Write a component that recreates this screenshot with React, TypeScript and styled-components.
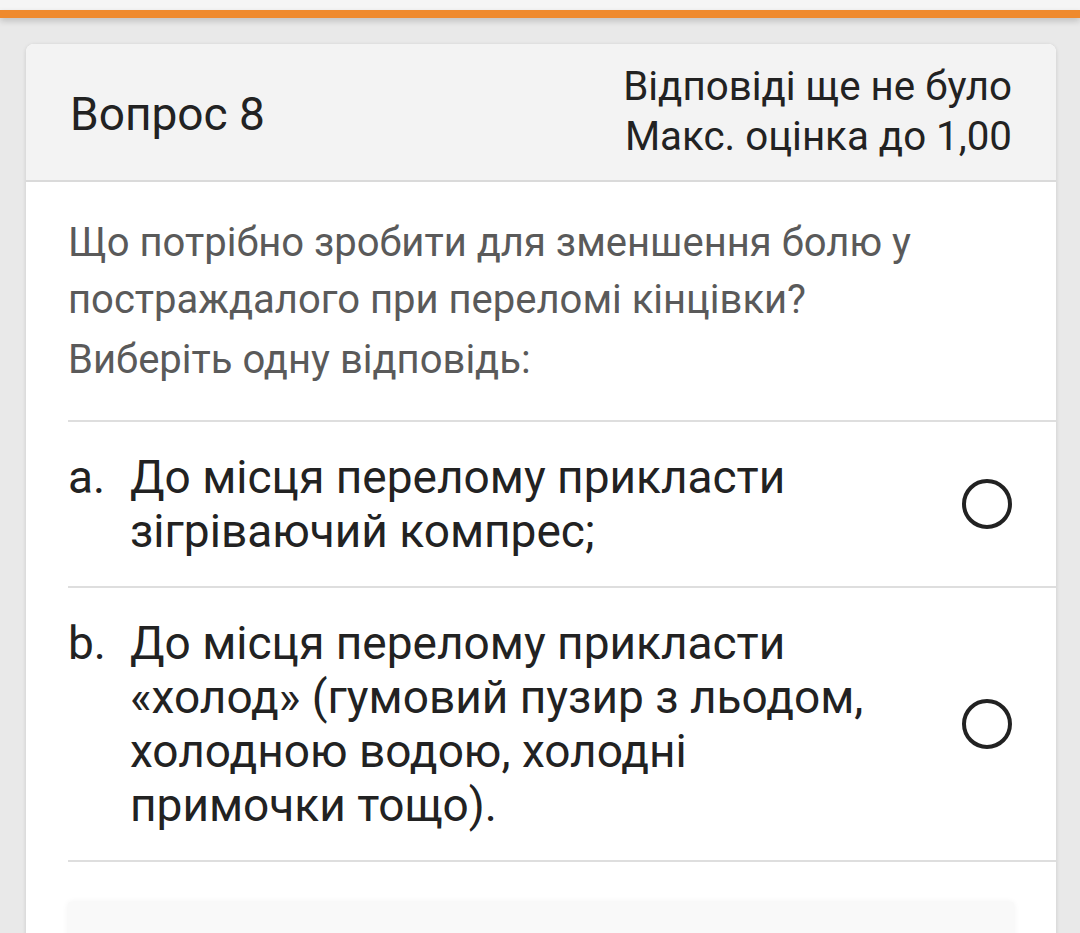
import styled, { createGlobalStyle } from 'styled-components';

const GlobalStyle = createGlobalStyle`
  html, body {
    margin: 0;
    padding: 0;
    background: #e9e9e9;
    font-family: Roboto, "Noto Sans", "Liberation Sans", sans-serif;
  }
`;

const Screen = styled.div`
  width: 1080px;
  height: 933px;
  overflow: hidden;
  background: #e9e9e9;
`;

const TopStrip = styled.div`
  height: 10px;
  background: #f5f5f5;
`;

const AccentBar = styled.div`
  height: 8px;
  background: #ef8a2e;
  box-shadow: 0 3px 6px rgba(0, 0, 0, 0.18);
`;

const Page = styled.div`
  padding: 26px 24px 0 26px;
`;

const Card = styled.div`
  background: #fff;
  border-radius: 8px;
  overflow: hidden;
  box-shadow: 0 1px 4px rgba(0, 0, 0, 0.14);
`;

const Header = styled.div`
  height: 136px;
  display: flex;
  align-items: center;
  justify-content: space-between;
  padding: 0 44px;
  background: #f3f3f3;
  border-bottom: 2px solid #dadada;
  color: #222;
`;

const Title = styled.div`
  font-size: 46px;
  padding-top: 4px;
`;

const Meta = styled.div`
  font-size: 40.3px;
  line-height: 50px;
  text-align: right;
`;

const Body = styled.div`
  padding: 32px 0 0 42px;
`;

const Question = styled.div`
  padding-right: 44px;
  color: #5a5a5a;
  font-size: 40px;
  line-height: 57px;
`;

const Prompt = styled.div`
  margin-top: 3px;
`;

const Answers = styled.div`
  margin-top: 32px;
  border-top: 2px solid #dedede;
`;

const Option = styled.div`
  display: flex;
  align-items: center;
  padding: 28px 44px 28px 0;
  border-bottom: 2px solid #dedede;
  color: #222;
  font-size: 46px;
  line-height: 54px;
`;

const Letter = styled.span`
  width: 62px;
  flex-shrink: 0;
  align-self: flex-start;
`;

const Text = styled.span`
  flex: 1;
  padding-right: 80px;
`;

const Radio = styled.span`
  width: 50px;
  height: 50px;
  box-sizing: border-box;
  border: 4px solid #222;
  border-radius: 50%;
  flex-shrink: 0;
`;

const Panel = styled.div`
  margin: 40px 42px 0 0;
  height: 120px;
  background: #f9f9f9;
  border-radius: 4px;
  box-shadow: 0 0 6px rgba(0, 0, 0, 0.06);
`;

const options = [
  { letter: 'a.', text: 'До місця перелому прикласти зігріваючий компрес;' },
  {
    letter: 'b.',
    text: 'До місця перелому прикласти «холод» (гумовий пузир з льодом, холодною водою, холодні примочки тощо).',
  },
];

export default function App() {
  return (
    <Screen>
      <GlobalStyle />
      <TopStrip />
      <AccentBar />
      <Page>
        <Card>
          <Header>
            <Title>Вопрос 8</Title>
            <Meta>
              <div>Відповіді ще не було</div>
              <div>Макс. оцінка до 1,00</div>
            </Meta>
          </Header>
          <Body>
            <Question>
              <div>Що потрібно зробити для зменшення болю у постраждалого при переломі кінцівки?</div>
              <Prompt>Виберіть одну відповідь:</Prompt>
            </Question>
            <Answers>
              {options.map((o) => (
                <Option key={o.letter}>
                  <Letter>{o.letter}</Letter>
                  <Text>{o.text}</Text>
                  <Radio />
                </Option>
              ))}
            </Answers>
            <Panel />
          </Body>
        </Card>
      </Page>
    </Screen>
  );
}
